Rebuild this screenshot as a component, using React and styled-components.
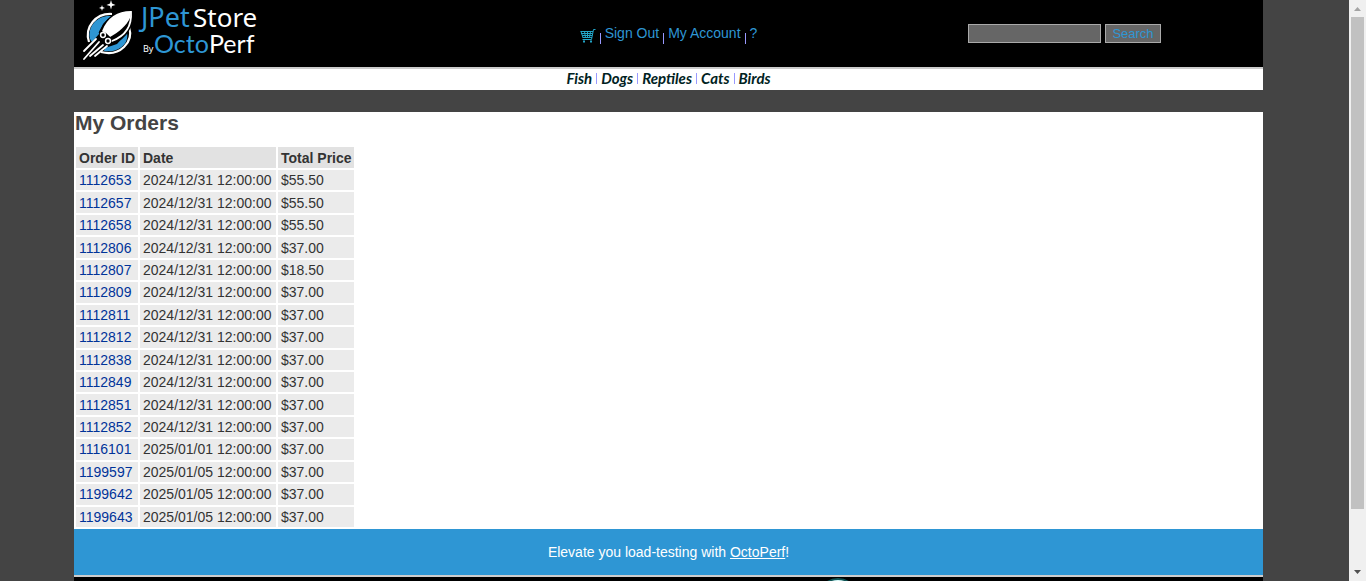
import React from "react";
import styled, { createGlobalStyle } from "styled-components";

const GlobalStyle = createGlobalStyle`
  * { box-sizing: border-box; }
  body {
    margin: 0;
    background: #444;
    color: #333;
    font-family: "Liberation Sans", Arial, sans-serif;
    font-size: 14px;
    line-height: 16px;
  }
`;

const Shell = styled.div`
  display: flex;
  height: 100vh;
  overflow: hidden;
`;

const Page = styled.div`
  flex: 1;
  min-width: 0;
  padding: 0 86px 0 74px;
  overflow: hidden;
`;

const Header = styled.header`
  display: grid;
  grid-template-columns: 36% 1fr 36%;
  height: 69px;
  background: #000;
  border-bottom: 2px solid #ccc;
`;

const LogoLink = styled.a`
  display: block;
  padding-left: 7px;
  svg { display: block; }
`;

const UserMenu = styled.nav`
  display: flex;
  justify-content: center;
  align-items: flex-start;
  padding-top: 25px;
`;

const UserLink = styled.a`
  color: #2e96d4;
  text-decoration: none;
  svg { display: block; margin-top: 4px; }
`;

const Divider = styled.span`
  width: 1px;
  height: 11px;
  margin: ${(p) => (p.$low ? "8px 4px 0" : "0 4px")};
  background: #9999ff;
`;

const SearchForm = styled.form`
  display: flex;
  justify-content: flex-end;
  align-items: flex-start;
  gap: 4px;
  padding: 24px 102px 0 0;
`;

const SearchInput = styled.input`
  width: 133px;
  height: 19px;
  border: 1px solid #aaa;
  background: #666;
  color: #eee;
`;

const SearchButton = styled.button`
  width: 56px;
  height: 19px;
  padding: 0;
  border: 1px solid #aaa;
  background: #666;
  color: #2e96d4;
  font: 13px/16px "Liberation Sans", Arial, sans-serif;
`;

const CategoryBar = styled.nav`
  display: flex;
  justify-content: center;
  align-items: center;
  height: 21px;
  padding-bottom: 3px;
  background: #fff;
`;

const CategoryLink = styled.a`
  color: #022;
  font: italic 700 15px/16px Lato, sans-serif;
  text-decoration: none;
`;

const Content = styled.main`
  margin-top: 22px;
  background: #fff;
`;

const Title = styled.h2`
  margin: 0;
  padding: 0 1px 11px;
  color: #444;
  font-size: 21px;
  line-height: 22px;
`;

const Orders = styled.table`
  height: 384px;
  border-spacing: 2px;
  border-collapse: separate;
  line-height: 15px;
`;

const HeadCell = styled.th`
  width: ${(p) => p.$width};
  padding: 4px 2px 2px 3px;
  background: #e2e2e2;
  text-align: left;
  white-space: nowrap;
`;

const Cell = styled.td`
  padding: 3px 2px 2px 3px;
  background: #ebebeb;
  white-space: nowrap;
`;

const OrderLink = styled.a`
  color: #039;
  text-decoration: none;
`;

const Banner = styled.aside`
  display: flex;
  justify-content: center;
  align-items: center;
  height: 46px;
  background: #2e96d4;
  color: #fff;
  a { color: #fff; }
`;

const Footer = styled.footer`
  display: flex;
  justify-content: center;
  height: 90px;
  padding-left: 338px;
  background: #000;
  border-top: 2px solid #ccc;
`;

const ScrollTrack = styled.div`
  display: flex;
  flex-direction: column;
  align-items: center;
  width: 17px;
  background: #f0f0f0;
  svg { display: block; flex: none; }
`;

const ScrollThumb = styled.div`
  width: 13px;
  height: 492px;
  margin-bottom: auto;
  background: #c1c1c1;
`;

const Logo = () => (
  <svg width="182" height="64" viewBox="0 0 182 64" role="img" aria-label="JPetStore by OctoPerf">
    <path d="M9 39C6 26 17 15 30 16L22 24 18 34 11 42Z" fill="#2e96d4" />
    <path d="M24 48 36 44 46 33C48 44 38 53 23 51Z" fill="#2e96d4" />
    <path d="M8 42C3 27 15 13 31 14M48 27C53 42 39 57 20 52" fill="none" stroke="#fff" strokeWidth="2.2" />
    <path d="M50 12C51 27 44 37 31 43L20 32C26 19 37 12 50 12Z" fill="#000" stroke="#000" strokeWidth="4" />
    <path d="M50 12C51 27 44 36 31 41L22 31C27 19 37 12 50 12Z" fill="#000" stroke="#fff" strokeWidth="1.8" />
    <path d="M50 12C37 12 27 19 22 31L29 37C38 32 46 25 49 18Z" fill="#fff" />
    <path d="M15 39 3 51M18 42 3 59M22 45 9 56M26 46 14 56" stroke="#fff" strokeWidth="1.8" strokeLinecap="round" />
    <path d="M17 37 20 31 25 33 31 39 30 45 24 44Z" fill="#000" />
    <circle cx="22" cy="35" r="2.4" fill="#000" stroke="#fff" strokeWidth="1.5" />
    <circle cx="27" cy="41" r="2.4" fill="#000" stroke="#fff" strokeWidth="1.5" />
    <path d="M30 0 31 3.500 34.500 5 31 6 30 9.500 29 6 25.500 5 29 3.500ZM21 5 21.700 7 24 8 21.700 8.700 21 11 20.300 8.700 18 8 20.300 7Z" fill="#fff" />
    <text x="60" y="27" fontFamily="Noto Sans, sans-serif" fontSize="27" fill="#2e96d4">JPet</text>
    <text x="112" y="27" fontFamily="Noto Sans, sans-serif" fontSize="26" fill="#fff">Store</text>
    <text x="62" y="52" fontFamily="Noto Sans, sans-serif" fontSize="9" fill="#fff">By</text>
    <text x="73" y="53" fontFamily="Lato, sans-serif" fontSize="25" fill="#2e96d4">Octo</text>
    <text x="128" y="53" fontFamily="Lato, sans-serif" fontSize="25" fill="#fff">Perf</text>
  </svg>
);

const Cart = () => (
  <svg width="16" height="14" viewBox="0 0 16 14" fill="none" stroke="#22a5c8" role="img" aria-label="Cart">
    <path d="M15.500 .5H13.500L11.500 10.500H2.500M.5 2.500H13M1 4.500H12.500M2 6.500H12M2.500 8.500H12M1 2.500 3 8.500M4.500 2.500 5.500 8.500M7.500 2.500V8.500M10.500 2.500 9.500 8.500" />
    <path d="M3 12.500H5M10 12.500H12" strokeWidth="2" />
  </svg>
);

const Arrow = ({ down }) => (
  <svg width="17" height="17" viewBox="0 0 17 17" aria-hidden="true">
    <path d={down ? "M5 6H12L8.500 10Z" : "M5 11H12L8.500 7Z"} fill={down ? "#505050" : "#a3a3a3"} />
  </svg>
);

const orders = [
  ["1112653", "2024/12/31", "$55.50"],
  ["1112657", "2024/12/31", "$55.50"],
  ["1112658", "2024/12/31", "$55.50"],
  ["1112806", "2024/12/31", "$37.00"],
  ["1112807", "2024/12/31", "$18.50"],
  ["1112809", "2024/12/31", "$37.00"],
  ["1112811", "2024/12/31", "$37.00"],
  ["1112812", "2024/12/31", "$37.00"],
  ["1112838", "2024/12/31", "$37.00"],
  ["1112849", "2024/12/31", "$37.00"],
  ["1112851", "2024/12/31", "$37.00"],
  ["1112852", "2024/12/31", "$37.00"],
  ["1116101", "2025/01/01", "$37.00"],
  ["1199597", "2025/01/05", "$37.00"],
  ["1199642", "2025/01/05", "$37.00"],
  ["1199643", "2025/01/05", "$37.00"],
];

const categories = ["Fish", "Dogs", "Reptiles", "Cats", "Birds"];

export default function App() {
  return (
    <>
      <GlobalStyle />
      <Shell>
        <Page>
          <Header>
            <LogoLink href="#home"><Logo /></LogoLink>
            <UserMenu aria-label="Account">
              <UserLink href="#cart"><Cart /></UserLink>
              <Divider $low />
              <UserLink href="#signout">Sign Out</UserLink>
              <Divider $low />
              <UserLink href="#account">My Account</UserLink>
              <Divider $low />
              <UserLink href="#help">?</UserLink>
            </UserMenu>
            <SearchForm onSubmit={(e) => e.preventDefault()}>
              <SearchInput type="text" aria-label="Search products" />
              <SearchButton type="submit">Search</SearchButton>
            </SearchForm>
          </Header>
          <CategoryBar aria-label="Categories">
            {categories.map((name, i) => (
              <React.Fragment key={name}>
                {i > 0 && <Divider />}
                <CategoryLink href={`#${name}`}>{name}</CategoryLink>
              </React.Fragment>
            ))}
          </CategoryBar>
          <Content>
            <Title>My Orders</Title>
            <Orders>
              <thead>
                <tr>
                  <HeadCell $width="62px">Order ID</HeadCell>
                  <HeadCell $width="136px">Date</HeadCell>
                  <HeadCell $width="76px">Total Price</HeadCell>
                </tr>
              </thead>
              <tbody>
                {orders.map(([id, date, total]) => (
                  <tr key={id}>
                    <Cell><OrderLink href={`#${id}`}>{id}</OrderLink></Cell>
                    <Cell>{date} 12:00:00</Cell>
                    <Cell>{total}</Cell>
                  </tr>
                ))}
              </tbody>
            </Orders>
          </Content>
          <Banner>
            <span>Elevate you load-testing with <a href="#octoperf">OctoPerf</a>!</span>
          </Banner>
          <Footer>
            <svg width="40" height="40" viewBox="0 0 40 40" aria-hidden="true">
              <circle cx="20" cy="22" r="20" fill="#dff" stroke="#155" strokeWidth="2" />
            </svg>
          </Footer>
        </Page>
        <ScrollTrack aria-hidden="true">
          <Arrow />
          <ScrollThumb />
          <Arrow down />
        </ScrollTrack>
      </Shell>
    </>
  );
}
